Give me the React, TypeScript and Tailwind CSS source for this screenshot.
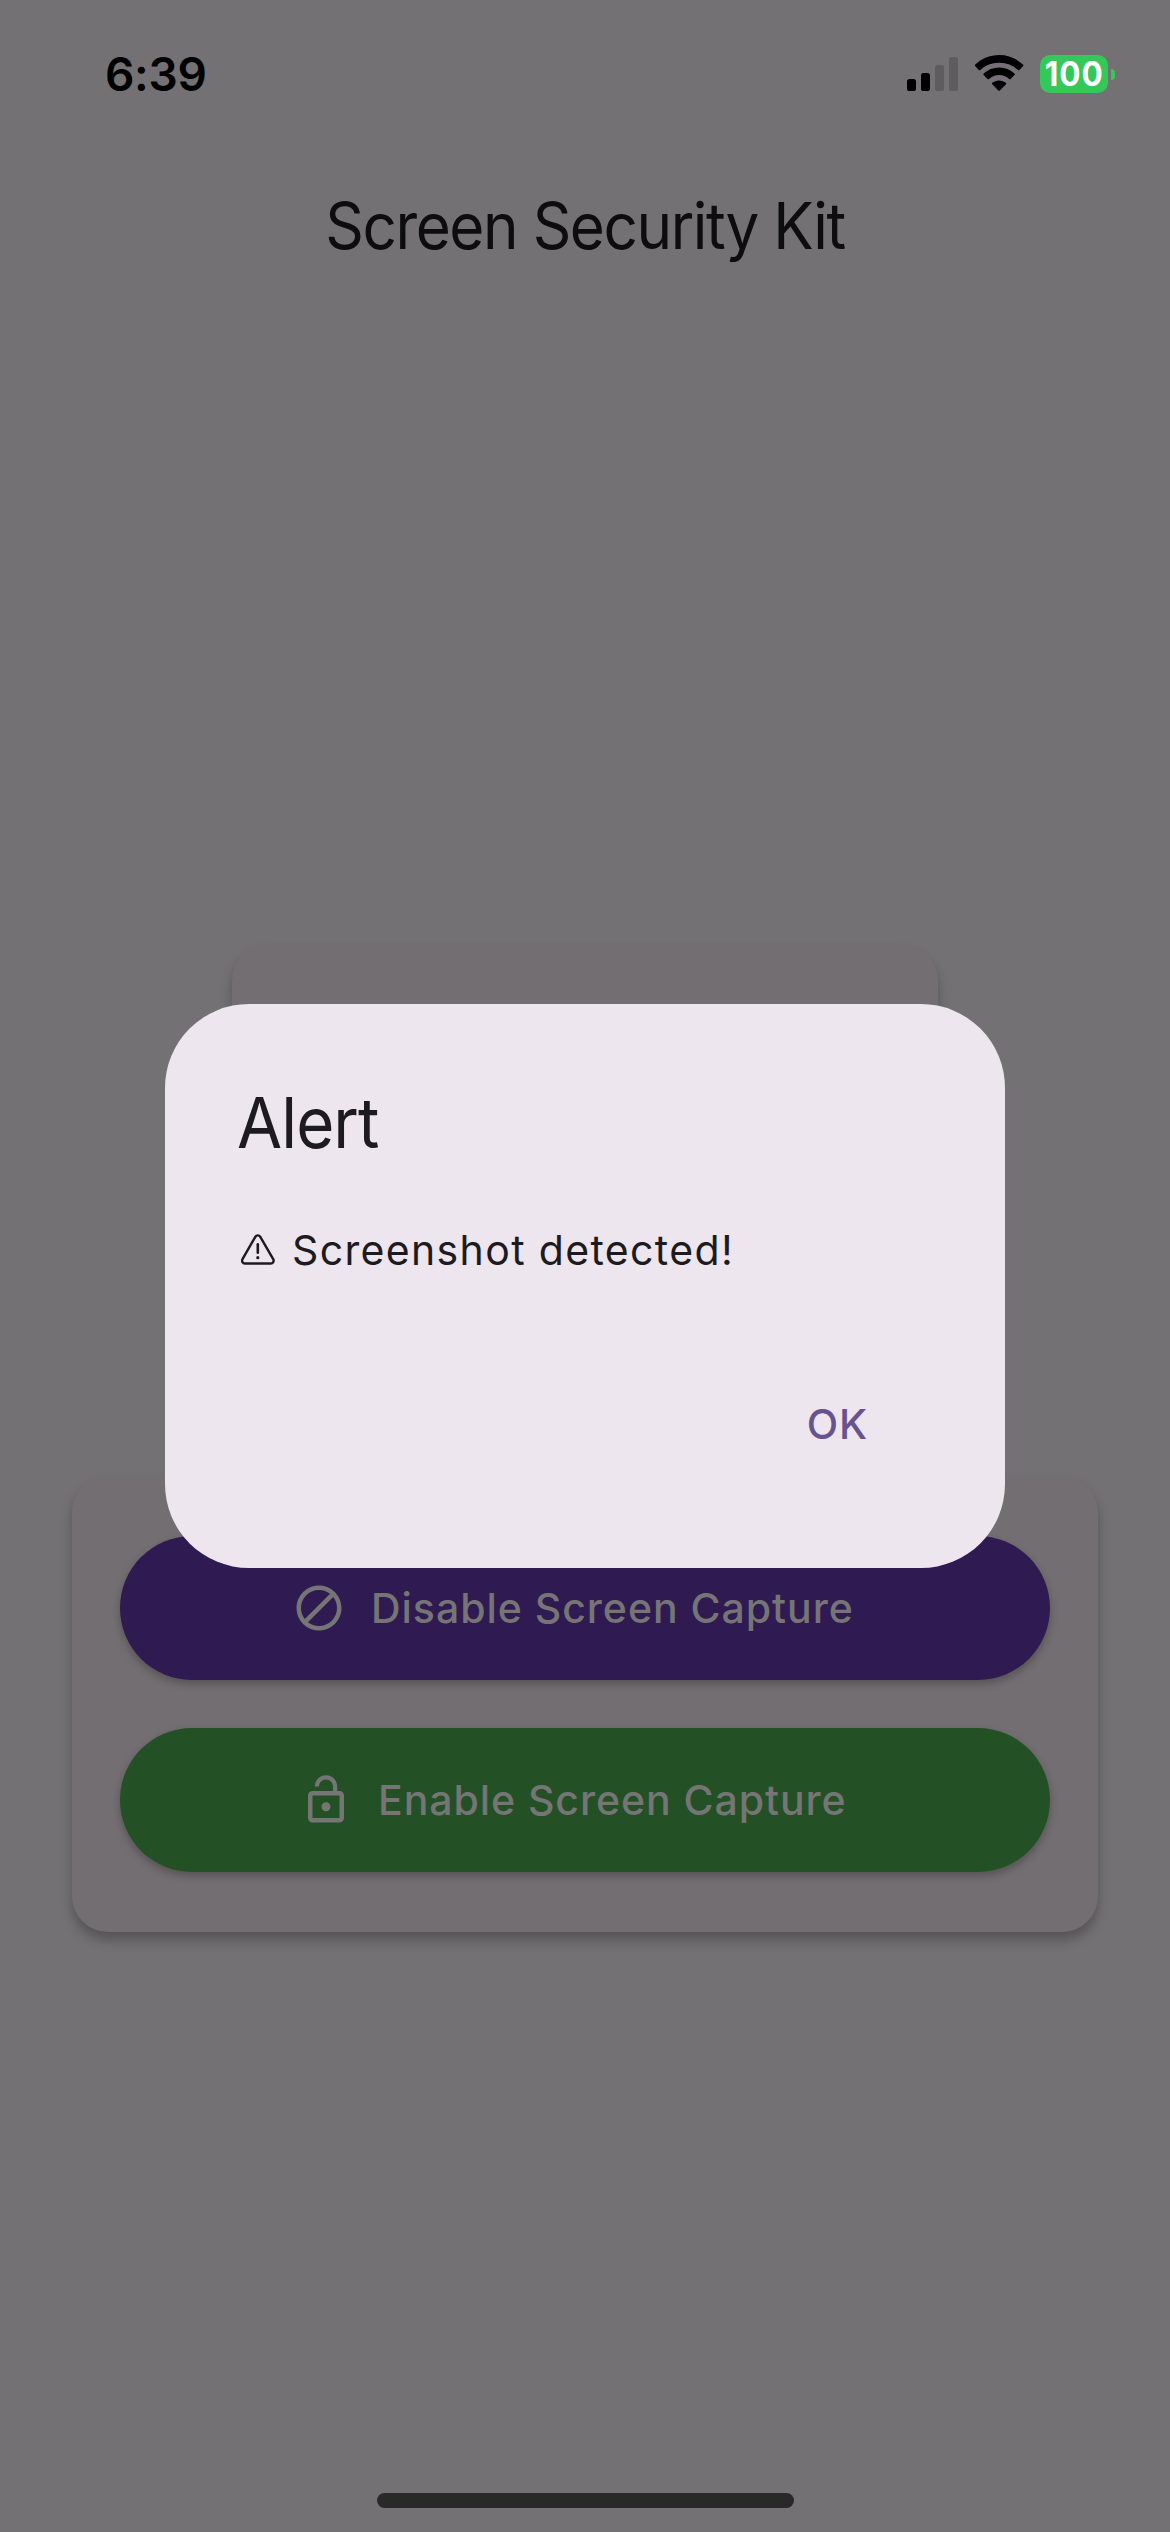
import React from "react";

function StatusBar() {
  return (
    <header className="flex h-[150px] items-start justify-between pl-[105px] pr-[55px] pt-[44px] text-black">
      <span className="text-[46px] font-semibold leading-[60px] tracking-[-0.3px]">6:39</span>
      <div className="flex pt-[11px]">
        <svg width="51" height="38" viewBox="0 0 51 38">
          <rect x="0" y="24" width="9" height="12" rx="2.6" fill="#000" />
          <rect x="14" y="18" width="9" height="18" rx="2.6" fill="#000" />
          <rect x="28" y="10" width="9" height="26" rx="2.6" fill="#5e5c5f" />
          <rect x="42" y="2" width="9" height="34" rx="2.6" fill="#5e5c5f" />
        </svg>
        <svg className="ml-[17px]" width="49" height="38" viewBox="0 0 49 38">
          <path d="M24.1 0C33.4 0 41.8 3.6 48 9.6c.5.5.5 1 .1 1.5l-3.7 3.8c-.5.5-1 .5-1.5 0A27 27 0 0 0 24.1 7.7 27 27 0 0 0 5.3 14.9c-.5.5-1 .5-1.5 0L.2 11.1c-.5-.5-.4-1 .1-1.5C6.4 3.6 14.8 0 24.1 0z" />
          <path d="M24.1 12.600c5.900 0 11.200 2.200 15.300 5.900.6.500.6 1 .1 1.500l-3.900 4c-.4.400-1 .400-1.400 0a15 15 0 0 0-20.200 0c-.5.400-1 .400-1.500 0l-3.800-4c-.5-.5-.5-1 .1-1.500 4.100-3.700 9.400-5.900 15.300-5.900z" />
          <path d="M24.1 25.400c2.600 0 5 .9 6.800 2.400.5.500.5 1 .1 1.500l-6.200 6.300c-.5.500-.900.500-1.400 0l-6.200-6.300c-.400-.5-.400-1 .1-1.500 1.800-1.500 4.200-2.400 6.800-2.400z" />
        </svg>
        <div className="ml-[16px] flex items-center">
          <div className="flex h-[38px] w-[68px] items-center justify-center rounded-[10px] bg-[#34c759] text-[33.5px] font-bold leading-[38px] text-white">
            <span className="scale-x-[0.94] pl-[1px] tracking-[1px]">100</span>
          </div>
          <div className="ml-[3px] h-[11px] w-[4px] rounded-r-full bg-[#34c759]" />
        </div>
      </div>
    </header>
  );
}

function BlockIcon() {
  return (
    <svg width="54" height="54" viewBox="0 0 24 24" fill="currentColor">
      <path d="M12 2C6.480 2 2 6.480 2 12s4.480 10 10 10 10-4.480 10-10S17.520 2 12 2zM4 12c0-4.420 3.580-8 8-8 1.850 0 3.550.630 4.900 1.690L5.690 16.900C4.630 15.550 4 13.850 4 12zm8 8c-1.850 0-3.550-.630-4.900-1.690L18.310 7.100C19.370 8.450 20 10.150 20 12c0 4.420-3.580 8-8 8z" />
    </svg>
  );
}

function LockOpenIcon() {
  return (
    <svg width="54" height="54" viewBox="0 0 24 24" fill="currentColor">
      <path d="M12 17c1.100 0 2-.9 2-2s-.9-2-2-2-2 .9-2 2 .9 2 2 2zm6-9h-1V6c0-2.760-2.240-5-5-5S7 3.240 7 6h1.900c0-1.710 1.390-3.100 3.100-3.100s3.100 1.390 3.100 3.100v2H6c-1.100 0-2 .9-2 2v10c0 1.100.9 2 2 2h12c1.100 0 2-.9 2-2V10c0-1.100-.9-2-2-2zm0 12H6V10h12v10z" />
    </svg>
  );
}

function WarningIcon() {
  return (
    <svg width="34" height="32" viewBox="0 0 34 32" fill="none" stroke="#1d1b20" strokeLinecap="round" strokeLinejoin="round">
      <path strokeWidth="2.4" d="M14.300 2.800a2.900 2.900 0 0 1 5 0L32.200 25.100a2.900 2.900 0 0 1-2.500 4.400H4a2.900 2.900 0 0 1-2.500-4.400z" />
      <path strokeWidth="2.6" d="M16.8 10.2v8.600" />
      <circle cx="16.8" cy="23.7" r="1.6" fill="#1d1b20" stroke="none" />
    </svg>
  );
}

function AlertDialog() {
  return (
    <div className="absolute inset-0 flex justify-center pt-[1003.5px]">
      <section role="alertdialog" className="flex h-[564px] w-[840px] flex-col rounded-[84px] bg-[#ede6ee] px-[72px] pt-[72px] text-[#1d1b20]">
        <h2 className="h-[96px] origin-left scale-x-[0.935] whitespace-nowrap text-[70px] leading-[94px] tracking-[-1px]">Alert</h2>
        <div className="mt-[42.5px] flex h-[72px] items-center pl-[4px]">
          <WarningIcon />
          <p className="ml-[17px] whitespace-nowrap text-[41px] leading-[72px] tracking-[1.35px]">Screenshot detected!</p>
        </div>
        <div className="mt-[78px] flex justify-end">
          <button className="mr-[35px] h-[120px] px-[30px] text-[41px] font-medium leading-[120px] tracking-[0.8px] text-[#67538f]">
            OK
          </button>
        </div>
      </section>
    </div>
  );
}

export default function App() {
  return (
    <div className="relative flex h-[2532px] w-[1170px] flex-col overflow-hidden bg-[#737174] font-['Inter',sans-serif]">
      <StatusBar />
      <h1 className="h-[152px] scale-x-[0.94] whitespace-nowrap text-center text-[64px] leading-[152px] tracking-[-1.5px] text-[#0d0c0e]">
        Screen Security Kit
      </h1>

      <main className="flex flex-1 flex-col items-center pt-[643px]">
        <div className="h-[459px] w-[706px] rounded-[36px] bg-[#736e71] shadow-[0_8px_12px_rgba(0,0,0,0.26)]" />
        <section className="mt-[72px] flex h-[456px] w-[1026px] flex-col gap-[48px] rounded-[36px] bg-[#736e71] px-[48px] pt-[60px] shadow-[0_8px_12px_rgba(0,0,0,0.26)]">
          <button className="flex h-[144px] w-full items-center rounded-full bg-[#2f1a52] pl-[172px] text-[#757575] shadow-[0_4px_8px_rgba(0,0,0,0.26)]">
            <BlockIcon />
            <span className="ml-[25px] whitespace-nowrap pt-[2px] text-[41px] font-medium tracking-[0.97px]">Disable Screen Capture</span>
          </button>
          <button className="flex h-[144px] w-full items-center rounded-full bg-[#235125] pl-[179px] text-[#757575] shadow-[0_4px_8px_rgba(0,0,0,0.26)]">
            <LockOpenIcon />
            <span className="ml-[25px] whitespace-nowrap pt-[2px] text-[41px] font-medium tracking-[0.94px]">Enable Screen Capture</span>
          </button>
        </section>
      </main>

      <AlertDialog />

      <div className="absolute bottom-[24px] left-[377px] h-[15px] w-[417px] rounded-full bg-[#292929]" />
    </div>
  );
}
